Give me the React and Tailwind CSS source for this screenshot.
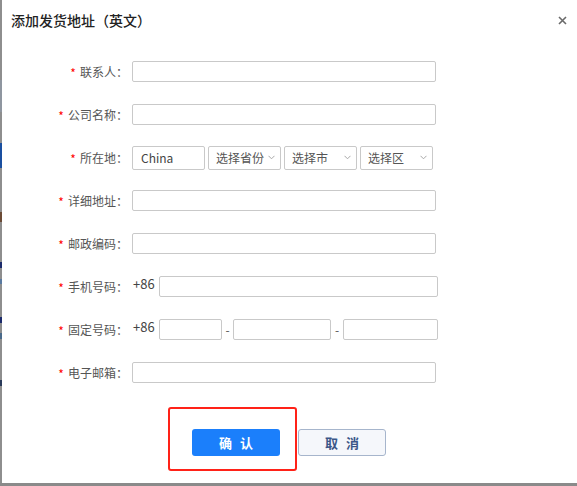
import React from "react";

const font = { fontFamily: '"Noto Sans CJK SC", "Noto Sans", sans-serif' };

function Label({ children }) {
  return (
    <div className="w-[126px] flex justify-end items-center text-[12px] text-[#555] whitespace-nowrap">
      <span className="text-[#f00] text-[12px] mr-[4px] relative top-[1px]">*</span>
      <span>{children}：</span>
    </div>
  );
}

function Input({ className = "", children }) {
  return (
    <div className={"h-[21px] border border-[#c9c9c9] rounded-[2px] bg-white flex items-center " + className}>
      {children}
    </div>
  );
}

function Chevron() {
  return (
    <svg width="7" height="5" viewBox="0 0 7 5" className="shrink-0">
      <path d="M0.5 0.8 L3.5 3.8 L6.5 0.8" fill="none" stroke="#a8a8a8" strokeWidth="1" />
    </svg>
  );
}

function Select({ text, className = "" }) {
  return (
    <div className={"h-[24px] border border-[#c9c9c9] rounded-[2px] bg-white flex items-center justify-between pl-[7px] pr-[5px] text-[12px] text-[#555] " + className}>
      <span>{text}</span>
      <Chevron />
    </div>
  );
}

function Row({ children }) {
  return <div className="h-[43px] flex items-center">{children}</div>;
}

export default function App() {
  return (
    <div style={font} className="w-[577px] h-[486px] flex flex-col bg-white overflow-hidden">
      <div className="flex flex-1 min-h-0">
        <div className="w-[2px] flex flex-col bg-[#8e8e8e] shrink-0">
          <div className="h-[80px]" />
          <div className="h-[32px] bg-[#8f96a0]" />
          <div className="h-[31px]" />
          <div className="h-[25px] bg-[#1a4fa0]" />
          <div className="h-[44px]" />
          <div className="h-[10px] bg-[#6b4a35]" />
          <div className="h-[40px]" />
          <div className="h-[6px] bg-[#1b2a6b]" />
          <div className="h-[11px]" />
          <div className="h-[5px] bg-[#5a7aa0]" />
          <div className="h-[33px]" />
          <div className="h-[6px] bg-[#1b2a6b]" />
          <div className="h-[10px]" />
          <div className="h-[6px] bg-[#4a6a8a]" />
          <div className="h-[41px]" />
          <div className="h-[6px] bg-[#2a3a5a]" />
        </div>
        <div className="flex-1 flex flex-col">
          <div className="h-[40px] flex items-center justify-between pl-[9px] pr-[10px]">
            <span className="text-[14px] font-medium text-[#222]">添加发货地址（英文）</span>
            <svg width="9" height="9" viewBox="0 0 9 9">
              <path d="M1 1 L8 8 M8 1 L1 8" stroke="#6a6a6a" strokeWidth="1.6" />
            </svg>
          </div>
          <div className="h-[10px]" />
          <Row>
            <Label>联系人</Label>
            <Input className="ml-[4px] w-[304px]" />
          </Row>
          <Row>
            <Label>公司名称</Label>
            <Input className="ml-[4px] w-[304px]" />
          </Row>
          <Row>
            <Label>所在地</Label>
            <div className="ml-[4px] flex gap-[3px]">
              <div className="h-[24px] w-[73px] border border-[#c9c9c9] rounded-[2px] flex items-center pl-[8px] text-[12px] text-[#444]">
                China
              </div>
              <Select text="选择省份" className="w-[73px]" />
              <Select text="选择市" className="w-[73px]" />
              <Select text="选择区" className="w-[73px]" />
            </div>
          </Row>
          <Row>
            <Label>详细地址</Label>
            <Input className="ml-[4px] w-[304px]" />
          </Row>
          <Row>
            <Label>邮政编码</Label>
            <Input className="ml-[4px] w-[304px]" />
          </Row>
          <Row>
            <Label>手机号码</Label>
            <span className="ml-[5px] w-[26px] text-[13px] text-[#444] relative top-[-3px]">+86</span>
            <Input className="w-[279px]" />
          </Row>
          <Row>
            <Label>固定号码</Label>
            <span className="ml-[5px] w-[26px] text-[13px] text-[#444] relative top-[-3px]">+86</span>
            <Input className="w-[63px]" />
            <span className="w-[11px] text-center text-[12px] text-[#555]">-</span>
            <Input className="w-[98px]" />
            <span className="w-[12px] text-center text-[12px] text-[#555]">-</span>
            <Input className="w-[95px]" />
          </Row>
          <Row>
            <Label>电子邮箱</Label>
            <Input className="ml-[4px] w-[304px]" />
          </Row>
          <div className="mt-[35px] flex justify-center gap-[18px] pr-[1px]">
            <div className="relative">
              <button className="w-[88px] h-[27px] rounded-[3px] bg-[#1b7ffb] text-white text-[13px] font-bold tracking-[0.6em] pl-[0.6em]">
                确认
              </button>
              <div className="absolute left-[-24px] top-[-22px] w-[129px] h-[64px] border-[2px] border-[#ff2218] rounded-[3px]" />
            </div>
            <button className="w-[88px] h-[27px] rounded-[3px] bg-[#f5f7fb] border border-[#a6b5cc] text-[#3b5688] text-[13px] font-bold tracking-[0.6em] pl-[0.6em]">
              取消
            </button>
          </div>
        </div>
      </div>
      <div className="h-[3px] bg-[#8a8a8a] shrink-0" />
    </div>
  );
}
